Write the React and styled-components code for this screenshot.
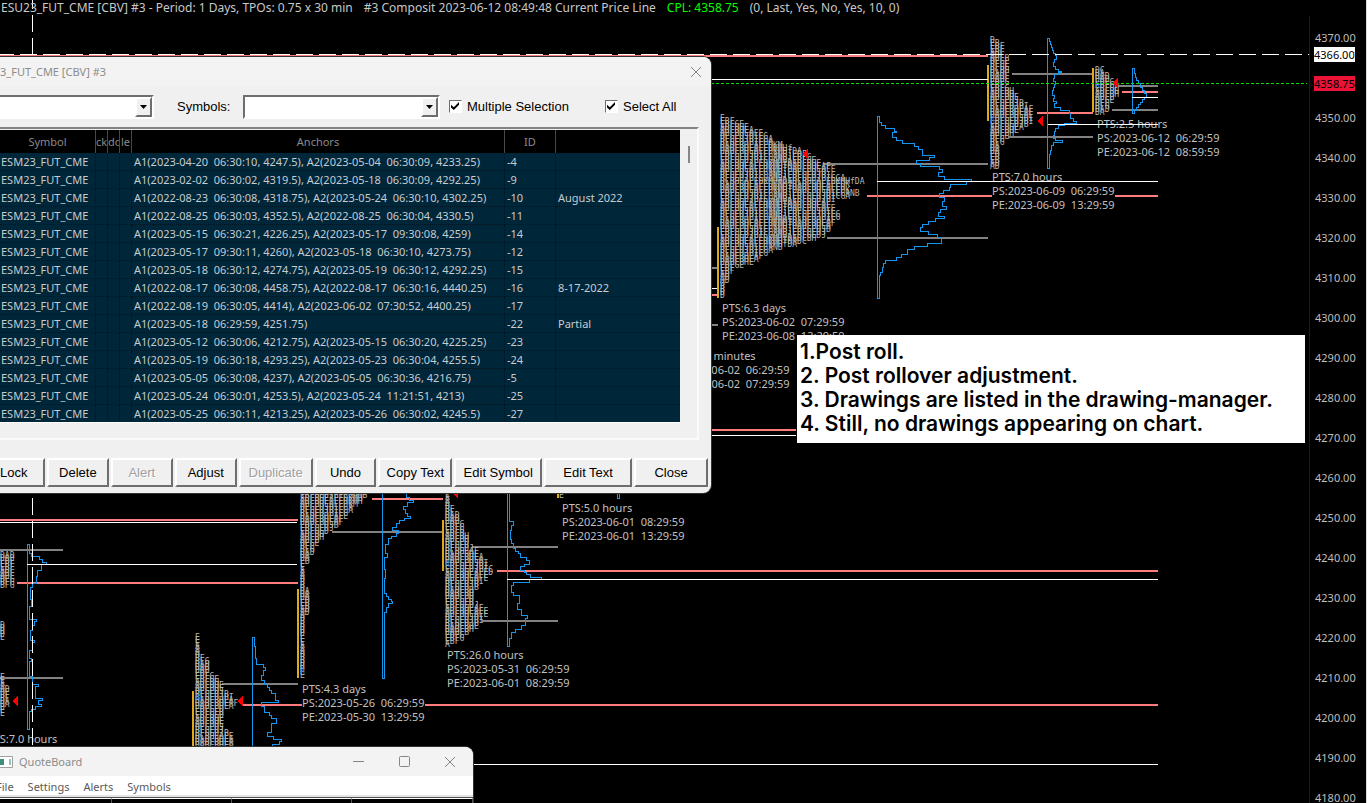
import React from 'react';
import styled, { createGlobalStyle, css } from 'styled-components';

const GlobalStyle = createGlobalStyle`
	* {
		box-sizing: border-box;
	}
	body {
		margin: 0;
		background: #000;
		font-family: 'Noto Sans', 'Open Sans', sans-serif;
		font-size: 11px;
		overflow: hidden;
	}
`;

const Desktop = styled.div`
	position: relative;
	display: flex;
	flex-direction: column;
	height: 100vh;
	overflow: hidden;
	background: #000;
	border-right: 1px solid #dcdcdc;
`;

const ChartHeader = styled.header`
	display: flex;
	gap: 11px;
	height: 16px;
	padding-left: 1px;
	font-size: 12px;
	line-height: 16px;
	color: #c8c8c8;
	white-space: pre;
	z-index: 1;
	.cpl {
		color: #00ff00;
	}
`;

const ChartBody = styled.main`
	flex: 1;
	display: flex;
	min-height: 0;
`;

const Canvas = styled.svg`
	flex: 1;
	min-width: 0;
	overflow: hidden;
	margin-top: -16px;
`;

const Tpo = styled.text`
	font-family: 'DejaVu Sans Mono', monospace;
	font-size: 8px;
	fill: ${({ $open }) => $open ? '#1e80f0' : '#b8b8b8'};
`;

const LabelText = styled.text`
	font-size: 11px;
	fill: #c0c0c0;
	white-space: pre;
`;

const Axis = styled.aside`
	width: 57px;
	border-left: 1px solid #1c1c1c;
	padding-top: 2px;
	color: #bebebe;
`;

const Tick = styled.div`
	height: 40px;
	line-height: 40px;
	padding-left: 5px;
`;

const PriceTag = styled.div`
	position: absolute;
	right: 11px;
	top: ${({ $top }) => $top}px;
	width: 41px;
	height: 15px;
	line-height: 15px;
	color: #000;
	background: ${({ $color }) => $color};
`;

const Note = styled.div`
	position: absolute;
	left: 797px;
	top: 335px;
	width: 508px;
	padding: 5px 3px 7px;
	background: #fff;
	color: #000;
	font: 600 21px/24px Inter, sans-serif;
	p {
		margin: 0;
		white-space: nowrap;
	}
`;

const Window = styled.section`
	position: absolute;
	left: 0;
	top: ${({ $top }) => $top}px;
	width: ${({ $width }) => $width}px;
	background: #f0f0f0;
	border-radius: ${({ $radius }) => $radius};
	overflow: hidden;
	box-shadow: 0 0 0 1px #333;
`;

const TitleBar = styled.div`
	display: flex;
	align-items: center;
	height: 29px;
	padding-right: ${({ $inset }) => $inset ? 8 : 0}px;
	background: #f3f3f3;
	color: #8c8c8c;
	h2 {
		flex: 1;
		margin: 0;
		font-size: 11px;
		font-weight: normal;
	}
`;

const TitleButton = styled.button`
	display: flex;
	align-items: center;
	justify-content: center;
	width: ${({ $wide }) => $wide ? 46 : 14}px;
	height: 28px;
	padding: 0;
	border: 0;
	background: none;
	color: #858585;
`;

const Toolbar = styled.div`
	display: flex;
	align-items: center;
	height: 41px;
	font: 13px 'Liberation Sans', sans-serif;
	color: #000;
	.symbols {
		margin: 0 10px 0 23px;
		width: 56px;
	}
`;

const sunken = css`
	border: 2px solid;
	border-color: #6e6e6e #fff #fff #6e6e6e;
`;

const raised = css`
	border: 2px solid;
	border-color: #fff #6e6e6e #6e6e6e #fff;
`;

const Combo = styled.div`
	${sunken}
	display: flex;
	width: ${({ $width }) => $width}px;
	height: 24px;
	background: #fff;
	border-left-width: ${({ $cut }) => $cut ? 0 : 2}px;
	select {
		flex: 1;
		min-width: 0;
		border: 0;
		appearance: none;
		background: #fff;
	}
	span {
		${raised}
		display: flex;
		align-items: center;
		justify-content: center;
		width: 17px;
		background: #f0f0f0;
	}
`;

const Check = styled.label`
	display: flex;
	align-items: center;
	gap: 5px;
	width: ${({ $width }) => $width}px;
	margin-left: 9px;
	white-space: nowrap;
	input {
		${sunken}
		appearance: none;
		width: 13px;
		height: 13px;
		margin: 0;
		background: #fff;
		border-width: 1px;
	}
	input:checked::after {
		content: '';
		display: block;
		width: 8px;
		height: 8px;
		margin: 1px;
		background: #000;
		clip-path: polygon(0 35%, 35% 65%, 100% 0, 100% 35%, 35% 100%, 0 70%);
	}
`;

const ListPanel = styled.div`
	display: flex;
	width: 699px;
	height: 313px;
	border: 2px solid;
	border-color: #828282 #e0e0e0 #e0e0e0 #828282;
	border-left: 0;
	border-right-color: #fafafa;
	border-bottom-color: #fafafa;
	padding-top: 1px;
`;

const ListScroll = styled.div`
	width: 680px;
	height: 293px;
	overflow: hidden;
	border-bottom: 1px solid #fff;
	background: #00263a;
`;

const Thumb = styled.div`
	width: 2px;
	height: 17px;
	margin: 16px 0 0 8px;
	background: #868686;
`;

const Table = styled.table`
	width: 680px;
	table-layout: fixed;
	border-collapse: separate;
	border-spacing: 0;
	color: #c6ccd0;
	th {
		height: 23px;
		padding: 0;
		background: #000;
		border-right: 1px solid #484848;
		color: #8a8a8a;
		font-weight: normal;
		line-height: 22px;
		overflow: hidden;
	}
	td {
		height: 18px;
		padding: 0 0 0 2px;
		line-height: 17px;
		border-bottom: 1px dotted #001521;
		border-right: 1px dotted #001521;
		white-space: pre;
		overflow: hidden;
	}
	td:first-child {
		padding-left: 1px;
	}
	th:last-child, td:last-child {
		border-right: 0;
	}
`;

const Actions = styled.div`
	display: flex;
	gap: 2px;
	padding: 18px 3px 6px 0;
`;

const ActionButton = styled.button`
	${raised}
	width: ${({ $width }) => $width}px;
	height: 29px;
	padding: 0;
	background: #f0f0f0;
	font: 13px 'Liberation Sans', sans-serif;
	color: #000;
	text-align: ${({ $cut }) => $cut ? 'left' : 'center'};
	border-left-width: ${({ $cut }) => $cut ? 0 : 2}px;
	&:disabled {
		color: #a0a0a0;
		text-shadow: 1px 1px 0 #fff;
	}
`;

const MenuBar = styled.nav`
	display: flex;
	gap: 14px;
	height: 21px;
	padding-top: 1px;
	margin-left: -4px;
	background: #fff;
	border-bottom: 2px solid #e4e4e4;
	button {
		border: 0;
		padding: 0;
		background: none;
		font: inherit;
		color: #5a5a5a;
	}
`;

const QuoteGrid = styled.div`
	display: grid;
	grid-template-columns: 112px 120px 120px 1fr;
	height: 12px;
	border-top: 1px solid #555;
	background: #000;
	div {
		border-top: 1px solid #fff;
		border-right: 1px solid #555;
	}
`;

const PINK = '#ff7c7c';
const GRAY = '#828282';
const WHITE = '#ffffff';
const GOLD = '#e0a91c';

// [x1, x2, y, color]
const backLines = [
	[0, 988, 56, PINK],
	[867, 1158, 196, PINK],
	[1037, 1093, 113, PINK],
	[1122, 1158, 92, PINK],
	[711, 717, 295, PINK],
	[711, 796, 430, PINK],
	[0, 298, 520, PINK],
	[17, 298, 583, PINK],
	[372, 443, 499, PINK],
	[497, 1158, 571, PINK],
	[243, 1158, 705, PINK],
	[823, 988, 164, GRAY],
	[827, 988, 238, GRAY],
	[1012, 1093, 74, GRAY],
	[1008, 1093, 137, GRAY],
	[1118, 1158, 86, GRAY],
	[1112, 1158, 110, GRAY],
	[711, 717, 268, GRAY],
	[711, 718, 325, GRAY],
	[0, 63, 550, GRAY],
	[332, 442, 532, GRAY],
	[472, 558, 547, GRAY],
	[482, 558, 621, GRAY],
	[0, 63, 678, GRAY],
	[222, 298, 684, GRAY],
];

const whiteLines = [
	[711, 988, 79],
	[877, 1158, 181],
	[1048, 1158, 124],
	[1132, 1158, 97],
	[711, 717, 288],
	[711, 796, 435],
	[0, 297, 522],
	[27, 297, 564],
	[507, 1158, 579],
	[473, 1158, 764],
];

// opening range bars: [x, y1, y2]
const ranges = [
	[987, 65, 121],
	[1092, 68, 112],
	[717, 227, 298],
	[442, 520, 571],
	[297, 589, 678],
	[192, 691, 748],
	[557, 490, 498],
];

// volume profiles: steps are [width, height]
const volumes = [
	{ x: 1047, y: 38, steps: [[2, 3], [3, 3], [4, 3], [5, 3], [6, 3], [8, 2], [9, 4], [7, 3], [6, 4], [8, 3], [11, 2], [14, 1], [11, 2], [7, 4], [6, 3], [8, 3], [7, 3], [6, 3], [5, 5], [7, 3], [6, 3], [9, 2], [7, 4], [13, 3], [22, 3], [23, 5], [26, 3], [29, 2], [17, 2], [11, 3], [8, 3], [7, 4], [6, 3], [8, 2], [15, 2], [6, 3], [4, 5], [3, 4], [2, 14]] },
	{ x: 877, y: 116, steps: [[2, 6], [4, 3], [8, 3], [17, 3], [19, 1], [15, 5], [19, 3], [25, 3], [37, 3], [41, 3], [45, 6], [57, 2], [52, 3], [39, 3], [43, 3], [62, 3], [65, 3], [61, 4], [67, 3], [94, 2], [89, 3], [73, 3], [72, 3], [66, 3], [62, 4], [67, 4], [65, 5], [69, 3], [63, 3], [61, 4], [67, 2], [58, 3], [51, 3], [45, 3], [43, 4], [51, 3], [60, 3], [64, 6], [50, 3], [37, 3], [30, 5], [24, 3], [19, 3], [8, 3], [6, 4], [5, 5], [3, 3], [2, 23]] },
	{ x: 1132, y: 68, steps: [[2, 5], [3, 4], [4, 3], [6, 3], [8, 4], [10, 3], [12, 3], [14, 4], [12, 2], [10, 3], [8, 2], [6, 3], [4, 3], [2, 3]] },
	{ x: 507, y: 490, steps: [[2, 31], [6, 4], [4, 5], [3, 9], [4, 4], [6, 5], [8, 3], [11, 2], [13, 4], [19, 3], [22, 4], [17, 2], [13, 4], [17, 2], [19, 2], [23, 3], [34, 2], [22, 3], [6, 3], [4, 7], [6, 3], [12, 8], [10, 6], [14, 6], [20, 3], [18, 7], [14, 4], [8, 3], [4, 6], [2, 8]] },
	{ x: 382, y: 490, steps: [[24, 7], [27, 3], [31, 2], [25, 4], [21, 3], [23, 4], [25, 3], [28, 2], [22, 2], [17, 3], [14, 4], [10, 3], [16, 3], [14, 3], [9, 2], [6, 6], [3, 9], [5, 4], [2, 12], [3, 9], [2, 15], [4, 3], [6, 3], [9, 2], [10, 2], [6, 4], [4, 5], [2, 66]] },
	{ x: 27, y: 544, steps: [[2, 9], [4, 3], [12, 3], [15, 3], [19, 2], [14, 6], [10, 6], [9, 7], [5, 4], [3, 12], [4, 7], [2, 13], [9, 2], [7, 4], [5, 5], [3, 10], [7, 2], [5, 8], [2, 8], [4, 3], [2, 15], [5, 8], [11, 2], [8, 12], [15, 2], [11, 4], [14, 2], [8, 3], [4, 2], [2, 18]] },
	{ x: 252, y: 637, steps: [[2, 9], [3, 12], [4, 6], [11, 3], [13, 3], [11, 5], [9, 5], [12, 4], [15, 3], [17, 3], [19, 3], [23, 7], [26, 2], [9, 4], [12, 6], [17, 3], [19, 3], [24, 5], [19, 9], [15, 4], [21, 3], [29, 2], [27, 3], [20, 6]] },
	{ x: 617, y: 480, steps: [[2, 18]] },
];

// letter profiles: points are [y, letters in the row], rows between are interpolated
const ROW = 3;
const profiles = [
	{ x: 720, points: [[121, 1], [124, 3], [127, 5], [132, 7], [137, 9], [147, 12], [152, 16], [162, 20], [168, 22], [171, 25], [175, 22], [180, 25], [184, 30], [188, 26], [194, 27], [197, 30], [201, 24], [208, 23], [218, 25], [226, 24], [236, 22], [240, 21], [244, 18], [248, 15], [253, 11], [258, 9], [266, 7], [270, 3], [282, 2], [288, 1], [300, 1]], open: [284, 'C'] },
	{ x: 990, points: [[43, 1], [45, 2], [52, 3], [66, 4], [86, 4], [88, 3], [94, 5], [102, 6], [108, 8], [112, 9], [124, 9], [128, 7], [136, 5], [140, 3], [152, 2], [170, 2]], open: [123, 'A'] },
	{ x: 1095, points: [[73, 2], [80, 3], [88, 4], [92, 5], [98, 5], [101, 4], [110, 3], [115, 2]], open: [88, 'A'] },
	{ x: 445, points: [[494, 1], [508, 1], [511, 2], [521, 3], [530, 4], [546, 5], [556, 7], [564, 8], [572, 10], [580, 9], [588, 7], [594, 6], [604, 6], [614, 9], [622, 8], [628, 7], [636, 5], [643, 3], [648, 1]], open: [567, 'A'] },
	{ x: 300, points: [[495, 14], [502, 13], [512, 11], [524, 9], [534, 6], [542, 4], [552, 3], [562, 2], [566, 1], [592, 1], [595, 2], [614, 2], [617, 1], [680, 1]], open: [674, 'A'] },
	{ x: 195, points: [[640, 1], [660, 1], [663, 3], [678, 3], [682, 5], [692, 6], [702, 8], [708, 9], [711, 6], [734, 6], [740, 8], [750, 8]], open: [701, 'A'] },
	{ x: 0, points: [[558, 3], [588, 3]] },
	{ x: 0, points: [[628, 1], [642, 1]] },
	{ x: 0, points: [[680, 1], [702, 2], [716, 1]] },
	{ x: 559, points: [[498, 1], [500, 1]] },
];

const ALPHABET = 'DEABDFCGBEHDEJABFIECDGKAMNHBfj';

const lengthAt = (points, y) => {
	const next = points.findIndex(([py]) => py >= y);
	if (next <= 0) return points[0][1];
	const [y1, n1] = points[next - 1];
	const [y2, n2] = points[next];
	return Math.round(n1 + (n2 - n1) * (y - y1) / (y2 - y1));
};

const getRows = (points) => {
	const rows = [];
	const last = points[points.length - 1][0];
	for (let y = points[0][0]; y <= last; y += ROW) {
		const shift = Math.floor((y % 37) / 9);
		let letters = '';
		for (let i = 0; i < lengthAt(points, y); i++) {
			letters += ALPHABET[(i * 2 + shift) % ALPHABET.length];
		}
		rows.push({ y, letters });
	}
	return rows;
};

const labels = [
	{ x: 1097, y: 128, lines: ['PTS:2.5 hours', 'PS:2023-06-12  06:29:59', 'PE:2023-06-12  08:59:59'] },
	{ x: 992, y: 181, lines: ['PTS:7.0 hours', 'PS:2023-06-09  06:29:59', 'PE:2023-06-09  13:29:59'] },
	{ x: 722, y: 312, lines: ['PTS:6.3 days', 'PS:2023-06-02  07:29:59', 'PE:2023-06-08  13:29:59'] },
	{ x: 667, y: 360, lines: ['PTS:60.0 minutes', 'PS:2023-06-02  06:29:59', 'PE:2023-06-02  07:29:59'] },
	{ x: 562, y: 512, lines: ['PTS:5.0 hours', 'PS:2023-06-01  08:29:59', 'PE:2023-06-01  13:29:59'] },
	{ x: 447, y: 659, lines: ['PTS:26.0 hours', 'PS:2023-05-31  06:29:59', 'PE:2023-06-01  08:29:59'] },
	{ x: 302, y: 693, lines: ['PTS:4.3 days', 'PS:2023-05-26  06:29:59', 'PE:2023-05-30  13:29:59'] },
	{ x: -13, y: 743, lines: ['PTS:7.0 hours'] },
];

// point of control arrows
const arrows = [[802, 154], [1037, 121], [1112, 83], [237, 701], [12, 701], [452, 493]];

const ticks = Array.from({ length: 20 }, (_, i) => 4370 - i * 10);

const drawings = [
	['A1(2023-04-20  06:30:10, 4247.5), A2(2023-05-04  06:30:09, 4233.25)', '-4', ''],
	['A1(2023-02-02  06:30:02, 4319.5), A2(2023-05-18  06:30:09, 4292.25)', '-9', ''],
	['A1(2022-08-23  06:30:08, 4318.75), A2(2023-05-24  06:30:10, 4302.25)', '-10', 'August 2022'],
	['A1(2022-08-25  06:30:03, 4352.5), A2(2022-08-25  06:30:04, 4330.5)', '-11', ''],
	['A1(2023-05-15  06:30:21, 4226.25), A2(2023-05-17  09:30:08, 4259)', '-14', ''],
	['A1(2023-05-17  09:30:11, 4260), A2(2023-05-18  06:30:10, 4273.75)', '-12', ''],
	['A1(2023-05-18  06:30:12, 4274.75), A2(2023-05-19  06:30:12, 4292.25)', '-15', ''],
	['A1(2022-08-17  06:30:08, 4458.75), A2(2022-08-17  06:30:16, 4440.25)', '-16', '8-17-2022'],
	['A1(2022-08-19  06:30:05, 4414), A2(2023-06-02  07:30:52, 4400.25)', '-17', ''],
	['A1(2023-05-18  06:29:59, 4251.75)', '-22', 'Partial'],
	['A1(2023-05-12  06:30:06, 4212.75), A2(2023-05-15  06:30:20, 4225.25)', '-23', ''],
	['A1(2023-05-19  06:30:18, 4293.25), A2(2023-05-23  06:30:04, 4255.5)', '-24', ''],
	['A1(2023-05-05  06:30:08, 4237), A2(2023-05-05  06:30:36, 4216.75)', '-5', ''],
	['A1(2023-05-24  06:30:01, 4253.5), A2(2023-05-24  11:21:51, 4213)', '-25', ''],
	['A1(2023-05-25  06:30:11, 4213.25), A2(2023-05-26  06:30:02, 4245.5)', '-27', ''],
];

const buttons = [
	{ label: 'Lock', width: 45, cut: true },
	{ label: 'Delete', width: 62 },
	{ label: 'Alert', width: 62, disabled: true },
	{ label: 'Adjust', width: 62 },
	{ label: 'Duplicate', width: 74, disabled: true },
	{ label: 'Undo', width: 62 },
	{ label: 'Copy Text', width: 74 },
	{ label: 'Edit Symbol', width: 88 },
	{ label: 'Edit Text', width: 88 },
	{ label: 'Close', width: 74 },
];

const volumePath = ({ x, y, steps }) => {
	let d = `M${x} ${y}`;
	let cy = y;
	steps.forEach(([w, h]) => {
		cy += h;
		d += `H${x + w}V${cy}`;
	});
	return `${d}H${x}Z`;
};

const Chart = () => (
	<Canvas shapeRendering="crispEdges">
		{backLines.map(([x1, x2, y, color]) => (
			<line key={`${x1}-${y}`} x1={x1} x2={x2} y1={y} y2={y} stroke={color} strokeWidth="2" />
		))}
		{ranges.map(([x, y1, y2]) => (
			<rect key={`${x}-${y1}`} x={x} y={y1} width="2" height={y2 - y1} fill={GOLD} />
		))}
		{profiles.map(({ x, points, open }) => (
			<g key={`${x}-${points[0][0]}`}>
				{getRows(points).map(({ y, letters }) => <Tpo key={y} x={x} y={y}>{letters}</Tpo>)}
				{open && <Tpo $open x={x} y={open[0]}>{open[1]}</Tpo>}
			</g>
		))}
		{labels.map(({ x, y, lines }) => (
			<g key={`${x}-${y}`}>
				{lines[1] && <rect x={x} y={y + 5} width="123" height="14" fill="#000" />}
				{lines.map((line, i) => <LabelText key={line} x={x} y={y + i * 14}>{line}</LabelText>)}
			</g>
		))}
		{volumes.map((volume) => (
			<path key={volume.x} d={volumePath(volume)} fill="none" stroke="#1296f0" transform="translate(0.5 0.5)" />
		))}
		{whiteLines.map(([x1, x2, y]) => (
			<rect key={`${x1}-${y}`} x={x1} y={y} width={x2 - x1} height="1" fill={WHITE} />
		))}
		<path d="M-3 54.5H1309" stroke={WHITE} strokeDasharray="17 6" />
		<path d="M32.5 -8V803" stroke={WHITE} strokeDasharray="17 6" />
		<path d="M711 83.5H1307" stroke="#00e400" strokeDasharray="3 2" />
		{arrows.map(([x, y]) => <path key={x} d={`M${x} ${y}l6 -6v12z`} fill="#ff0000" />)}
	</Canvas>
);

const CloseIcon = () => (
	<svg width="12" height="12" viewBox="0 0 12 12" fill="none" stroke="currentColor">
		<path d="M1 1l10 10M11 1L1 11" />
	</svg>
);

const ComboBox = ({ width, cut, label }) => (
	<Combo $width={width} $cut={cut}>
		<select aria-label={label} />
		<span>
			<svg width="7" height="4"><path d="M0 0h7L3.5 4z" fill="#000" /></svg>
		</span>
	</Combo>
);

const DrawingManager = () => (
	<Window $top={57} $width={711} $radius="0 8px 8px 0">
		<TitleBar $inset>
			<h2>3_FUT_CME [CBV] #3</h2>
			<TitleButton aria-label="Close window"><CloseIcon /></TitleButton>
		</TitleBar>
		<Toolbar>
			<ComboBox width={154} cut label="Chart" />
			<span className="symbols">Symbols:</span>
			<ComboBox width={197} label="Symbols" />
			<Check $width={147}>
				<input type="checkbox" defaultChecked />
				Multiple Selection
			</Check>
			<Check $width={80}>
				<input type="checkbox" defaultChecked />
				Select All
			</Check>
		</Toolbar>
		<ListPanel>
			<ListScroll>
				<Table>
					<colgroup>
						<col style={{ width: 96 }} />
						<col style={{ width: 12 }} />
						<col style={{ width: 12 }} />
						<col style={{ width: 12 }} />
						<col style={{ width: 373 }} />
						<col style={{ width: 51 }} />
						<col />
					</colgroup>
					<thead>
						<tr>
							<th>Symbol</th>
							<th>ck</th>
							<th>dd</th>
							<th>le</th>
							<th>Anchors</th>
							<th>ID</th>
							<th />
						</tr>
					</thead>
					<tbody>
						{drawings.map(([anchors, id, text]) => (
							<tr key={id}>
								<td>ESM23_FUT_CME</td>
								<td />
								<td />
								<td />
								<td>{anchors}</td>
								<td>{id}</td>
								<td>{text}</td>
							</tr>
						))}
					</tbody>
				</Table>
			</ListScroll>
			<Thumb />
		</ListPanel>
		<Actions>
			{buttons.map(({ label, width, cut, disabled }) => (
				<ActionButton key={label} $width={width} $cut={cut} disabled={disabled}>{label}</ActionButton>
			))}
		</Actions>
	</Window>
);

const QuoteBoard = () => (
	<Window $top={747} $width={473} $radius="0 8px 0 0">
		<TitleBar>
			<svg width="19" height="12" viewBox="0 0 19 12">
				<path d="M0 0.5H12.5V11.5H0" fill="#fff" stroke="#a0a0a0" />
				<path d="M0 3h4v6H0z" fill="#3f8f80" />
				<path d="M9 3h2v6H9z" fill="#8fc4c0" />
			</svg>
			<h2>QuoteBoard</h2>
			<TitleButton $wide aria-label="Minimize">
				<svg width="11" height="11" stroke="currentColor"><path d="M0 5.5h11" /></svg>
			</TitleButton>
			<TitleButton $wide aria-label="Maximize">
				<svg width="11" height="11" fill="none" stroke="currentColor"><rect x="0.5" y="0.5" width="10" height="10" rx="1" /></svg>
			</TitleButton>
			<TitleButton $wide aria-label="Close QuoteBoard"><CloseIcon /></TitleButton>
		</TitleBar>
		<MenuBar>
			<button>File</button>
			<button>Settings</button>
			<button>Alerts</button>
			<button>Symbols</button>
		</MenuBar>
		<QuoteGrid>
			<div />
			<div />
			<div />
			<div />
		</QuoteGrid>
	</Window>
);

const App = () => (
	<>
		<GlobalStyle />
		<Desktop>
			<ChartHeader>
				<span>ESU23_FUT_CME [CBV] #3 - Period: 1 Days, TPOs: 0.75 x 30 min</span>
				<span>#3 Composit 2023-06-12 08:49:48 Current Price Line</span>
				<span className="cpl">CPL: 4358.75</span>
				<span>(0, Last, Yes, No, Yes, 10, 0)</span>
			</ChartHeader>
			<ChartBody>
				<Chart />
				<Axis>
					{ticks.map((price) => (
						<Tick key={price}>{price === 4360 ? '' : price.toFixed(2)}</Tick>
					))}
				</Axis>
			</ChartBody>
			<PriceTag $top={47} $color="#fff">4366.00</PriceTag>
			<PriceTag $top={76} $color="#ec1337">4358.75</PriceTag>
			<Note>
				<p>1.Post roll.</p>
				<p>2. Post rollover adjustment.</p>
				<p>3. Drawings are listed in the drawing-manager.</p>
				<p>4. Still, no drawings appearing on chart.</p>
			</Note>
			<DrawingManager />
			<QuoteBoard />
		</Desktop>
	</>
);

export default App;
